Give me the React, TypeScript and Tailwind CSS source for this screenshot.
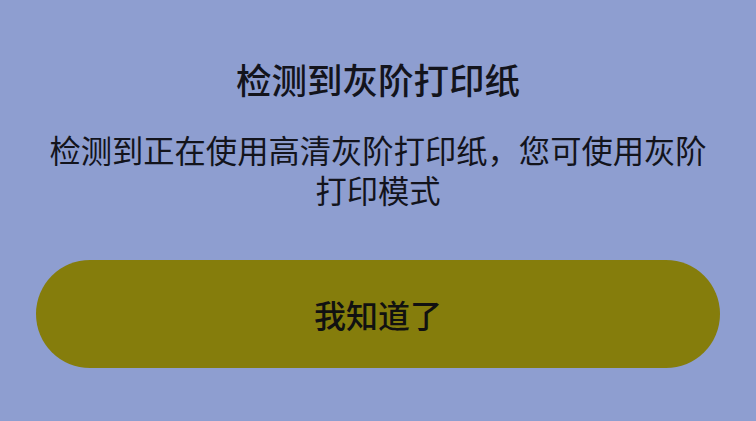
export default function App() {
  return (
    <div
      className="flex h-[421px] w-[756px] flex-col items-center bg-[#8e9ed0] text-[#13141c]"
      style={{ fontFamily: '"Noto Sans CJK SC", "Noto Sans", sans-serif' }}
    >
      <h1 className="mt-[55px] text-[35.5px] font-medium leading-[48px]">
        检测到灰阶打印纸
      </h1>
      <p className="mt-[27px] px-[30px] text-center text-[31.3px] leading-[40px]">
        检测到正在使用高清灰阶打印纸，您可使用灰阶
        <br />
        打印模式
      </p>
      <button
        type="button"
        className="mt-[50px] h-[108px] w-[684px] rounded-full bg-[#857d0c] text-[32px] font-medium text-[#111]"
      >
        我知道了
      </button>
    </div>
  );
}
